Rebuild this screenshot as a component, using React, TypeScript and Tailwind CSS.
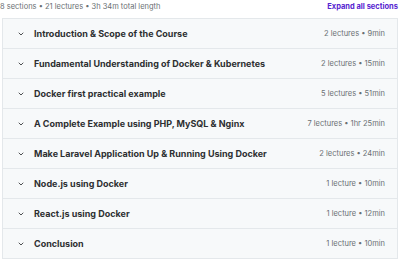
import { ChevronDown } from 'lucide-react';

type Section = {
  title: string;
  meta: string;
};

const sections: Section[] = [
  { title: 'Introduction & Scope of the Course', meta: '2 lectures • 9min' },
  { title: 'Fundamental Understanding of Docker & Kubernetes', meta: '2 lectures • 15min' },
  { title: 'Docker first practical example', meta: '5 lectures • 51min' },
  { title: 'A Complete Example using PHP, MySQL & Nginx', meta: '7 lectures • 1hr 25min' },
  { title: 'Make Laravel Application Up & Running Using Docker', meta: '2 lectures • 24min' },
  { title: 'Node.js using Docker', meta: '1 lecture • 10min' },
  { title: 'React.js using Docker', meta: '1 lecture • 12min' },
  { title: 'Conclusion', meta: '1 lecture • 10min' },
];

export default function App() {
  return (
    <div className="w-[400px] h-[259px] overflow-hidden bg-white font-['Inter',sans-serif] text-[#2d2f31]">
      <div className="flex items-center justify-between h-[14px] pr-[2px]">
        <span className="text-[7.5px] text-[#6a6f73]">8 sections • 21 lectures • 3h 34m total length</span>
        <span className="text-[7.5px] font-bold text-[#5624d0]">Expand all sections</span>
      </div>
      <div className="mt-[4px] mx-[2px] border border-[#e4e8eb]">
        {sections.map((s) => (
          <div
            key={s.title}
            className="flex items-center justify-between h-[30px] bg-[#f7f9fa] border-b border-[#e4e8eb] pl-[14px] pr-[12px]"
          >
            <div className="flex items-center gap-[9px]">
              <ChevronDown className="w-[8px] h-[8px] text-[#2d2f31]" strokeWidth={2.5} />
              <span className="text-[9px] font-bold">{s.title}</span>
            </div>
            <span className="text-[7.5px] text-[#6a6f73]">{s.meta}</span>
          </div>
        ))}
      </div>
    </div>
  );
}
